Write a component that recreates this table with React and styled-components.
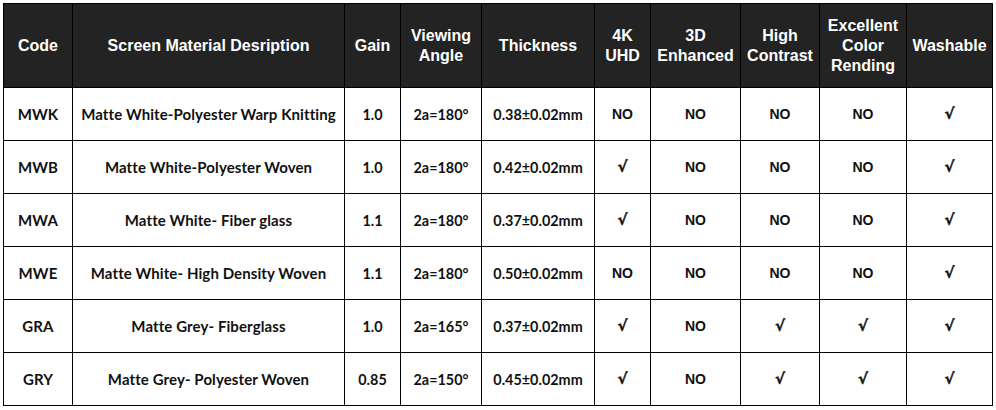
import React from 'react'
import styled, { createGlobalStyle } from 'styled-components'

const GlobalStyle = createGlobalStyle`
  html, body {
    margin: 0;
    padding: 0;
    background: #ffffff;
  }
  body {
    padding: 3px;
  }
`

const Table = styled.table`
  border-collapse: collapse;
  table-layout: fixed;
  width: 990px;
  background: #ffffff;
`

const Col = styled.col`
  width: ${p => p.w}px;
`

const HeadCell = styled.th`
  height: 83px;
  padding: 0 2px;
  background: #232323;
  color: #ffffff;
  border: 1px solid #000000;
  font-family: Arial, 'Liberation Sans', sans-serif;
  font-weight: 700;
  font-size: 16px;
  line-height: 20px;
  text-align: center;
  vertical-align: middle;
`

const fonts = {
  text: "Lato, 'Open Sans', sans-serif",
  arial: "Arial, 'Liberation Sans', sans-serif",
}

const sizes = { text: '15px', num: '14.4px', arial: '14px' }

const Cell = styled.td`
  height: 52px;
  padding: 0;
  border: 1px solid #000000;
  color: #111111;
  text-align: center;
  vertical-align: middle;
  font-weight: 700;
  font-family: ${p => (p.kind === 'arial' ? fonts.arial : fonts.text)};
  font-size: ${p => sizes[p.kind]};
  letter-spacing: ${p => (p.kind === 'text' ? '0.1px' : '0')};
`

const Check = styled.span`
  font-family: 'DejaVu Sans', sans-serif;
  font-weight: 700;
  font-size: 15px;
  color: #111111;
  -webkit-text-stroke: 0.4px #111111;
`

const widths = [69, 272, 56, 81, 113, 56, 90, 79, 87, 86]

const headers = [
  ['Code'],
  ['Screen Material Desription'],
  ['Gain'],
  ['Viewing', 'Angle'],
  ['Thickness'],
  ['4K', 'UHD'],
  ['3D', 'Enhanced'],
  ['High', 'Contrast'],
  ['Excellent', 'Color', 'Rending'],
  ['Washable'],
]

const rows = [
  ['MWK', 'Matte White-Polyester Warp Knitting', '1.0', '2a=180°', '0.38±0.02mm', 'NO', 'NO', 'NO', 'NO', '√'],
  ['MWB', 'Matte White-Polyester Woven', '1.0', '2a=180°', '0.42±0.02mm', '√', 'NO', 'NO', 'NO', '√'],
  ['MWA', 'Matte White- Fiber glass', '1.1', '2a=180°', '0.37±0.02mm', '√', 'NO', 'NO', 'NO', '√'],
  ['MWE', 'Matte White- High Density Woven', '1.1', '2a=180°', '0.50±0.02mm', 'NO', 'NO', 'NO', 'NO', '√'],
  ['GRA', 'Matte Grey- Fiberglass', '1.0', '2a=165°', '0.37±0.02mm', '√', 'NO', '√', '√', '√'],
  ['GRY', 'Matte Grey- Polyester Woven', '0.85', '2a=150°', '0.45±0.02mm', '√', 'NO', '√', '√', '√'],
]

const kindOf = i => (i >= 5 ? 'arial' : i >= 2 ? 'num' : 'text')

export default function App() {
  return (
    <>
      <GlobalStyle />
      <Table>
        <colgroup>
          {widths.map((w, i) => (
            <Col key={i} w={w} />
          ))}
        </colgroup>
        <thead>
          <tr>
            {headers.map((lines, i) => (
              <HeadCell key={i}>
                {lines.map((l, j) => (
                  <React.Fragment key={j}>
                    {j > 0 && <br />}
                    {l}
                  </React.Fragment>
                ))}
              </HeadCell>
            ))}
          </tr>
        </thead>
        <tbody>
          {rows.map(r => (
            <tr key={r[0]}>
              {r.map((v, i) => (
                <Cell key={i} kind={kindOf(i)}>
                  {v === '√' ? <Check>√</Check> : v}
                </Cell>
              ))}
            </tr>
          ))}
        </tbody>
      </Table>
    </>
  )
}
